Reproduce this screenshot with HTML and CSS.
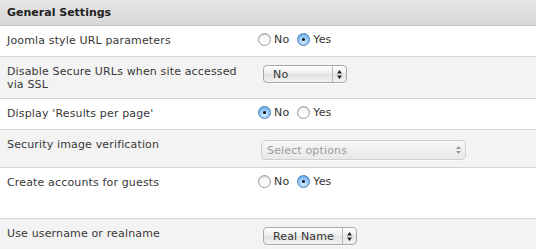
FILE: index.html
```html
<!DOCTYPE html>
<html lang="en">

<head>
    <meta charset="UTF-8" />
    <title>General Settings</title>
    <link rel="stylesheet" href="styles.css">
</head>

<body>

    <div class="settings">
        <div class="settings-head">General Settings</div>

        <div class="row">
            <div class="label">Joomla style URL parameters</div>
            <div class="control">
                <label class="radio"><input type="radio" name="sef"> No</label>
                <label class="radio"><input type="radio" name="sef" checked> Yes</label>
            </div>
        </div>

        <div class="row alt">
            <div class="label">Disable Secure URLs when site accessed via SSL</div>
            <div class="control">
                <span class="select select-no">
                    <select>
                        <option>No</option>
                        <option>Yes</option>
                    </select>
                    <span class="arrows">
                        <svg width="5" height="9" viewBox="0 0 5 9"><path d="M2.5 0 L5 3.5 H0 Z M0 5.5 H5 L2.5 9 Z" fill="#222"/></svg>
                    </span>
                </span>
            </div>
        </div>

        <div class="row">
            <div class="label">Display 'Results per page'</div>
            <div class="control">
                <label class="radio"><input type="radio" name="rpp" checked> No</label>
                <label class="radio"><input type="radio" name="rpp"> Yes</label>
            </div>
        </div>

        <div class="row alt tall">
            <div class="label">Security image verification</div>
            <div class="control">
                <span class="select select-multi">
                    <select disabled>
                        <option>Select options</option>
                    </select>
                    <span class="arrows">
                        <svg width="5" height="8" viewBox="0 0 5 8"><path d="M2.5 0 L5 3 H0 Z M0 5 H5 L2.5 8 Z" fill="#999"/></svg>
                    </span>
                </span>
            </div>
        </div>

        <div class="row taller">
            <div class="label">Create accounts for guests</div>
            <div class="control">
                <label class="radio"><input type="radio" name="guest"> No</label>
                <label class="radio"><input type="radio" name="guest" checked> Yes</label>
            </div>
        </div>

        <div class="row alt">
            <div class="label">Use username or realname</div>
            <div class="control">
                <span class="select select-name">
                    <select>
                        <option>Real Name</option>
                        <option>Username</option>
                    </select>
                    <span class="arrows">
                        <svg width="5" height="9" viewBox="0 0 5 9"><path d="M2.5 0 L5 3.5 H0 Z M0 5.5 H5 L2.5 9 Z" fill="#222"/></svg>
                    </span>
                </span>
            </div>
        </div>
    </div>

</body>

</html>
```

FILE: styles.css
```css
body {
    margin: 0;
    background-color: #fff;
    font-family: 'DejaVu Sans', Verdana, sans-serif;
    font-size: 11px;
    line-height: 13px;
    color: #333;
}

.settings-head {
    height: 25px;
    line-height: 25px;
    padding: 0 7px;
    font-weight: bold;
    color: #222;
    background: linear-gradient(#e6e6e6, #d7d7d7);
    border-bottom: 1px solid #c4c4c4;
}

.row {
    display: grid;
    grid-template-columns: 251px 1fr;
    padding: 7px 7px 7px 7px;
    min-height: 16px;
    border-bottom: 1px solid #d4d4d4;
    background-color: #fff;
}

.row.alt {
    background-color: #f3f3f3;
}

.row.tall {
    min-height: 23px;
}

.row.taller {
    min-height: 36px;
}

.label {
    padding-top: 1px;
    padding-right: 10px;
    letter-spacing: 0.15px;
    color: #383838;
}

.control {
    display: flex;
    align-items: flex-start;
    gap: 8px;
}

/* radios, aqua style */
.radio {
    display: inline-flex;
    align-items: center;
    gap: 3px;
    color: #333;
    letter-spacing: 0.15px;
}

.radio input {
    appearance: none;
    margin: 0;
    width: 13px;
    height: 13px;
    border-radius: 50%;
    border: 1px solid #9a9a9a;
    background: linear-gradient(#f4f4f4, #ffffff);
    box-shadow: inset 0 1px 1px rgba(0, 0, 0, 0.15);
    position: relative;
}

.radio input:checked {
    border-color: #4a7fb8;
    background: radial-gradient(circle at 50% 70%, #d6ecff 0, #8ec4f5 55%, #4f9de3 100%);
    box-shadow: none;
}

.radio input:checked::after {
    content: "";
    position: absolute;
    left: 4px;
    top: 4px;
    width: 3px;
    height: 3px;
    border-radius: 50%;
    background-color: #111;
}

/* selects */
.select {
    display: inline-flex;
    align-items: stretch;
    height: 16px;
    border: 1px solid #a8a8a8;
    border-radius: 4px;
    background: linear-gradient(#ffffff, #ececec 50%, #e2e2e2 51%, #f2f2f2);
    box-shadow: 0 1px 0 rgba(255, 255, 255, 0.6);
}

.select select {
    appearance: none;
    border: none;
    background: transparent;
    font-family: inherit;
    font-size: 11px;
    color: #333;
    padding: 0 6px 0 9px;
    margin: 0;
    outline: none;
    letter-spacing: 0.15px;
}

.select .arrows {
    display: flex;
    align-items: center;
    justify-content: center;
    width: 13px;
    border-left: 1px solid #b8b8b8;
}

.select-no {
    margin: 1px 0 0 5px;
}

.select-no select {
    width: 68px;
}

.select-name {
    margin: 1px 0 0 5px;
}

.select-name select {
    width: 78px;
}

.select-multi {
    margin: 3px 0 0 3px;
    height: 18px;
    border-color: #cfcfcf;
    background: linear-gradient(#f6f6f6, #e9e9e9);
}

.select-multi select {
    width: 190px;
    color: #777;
    padding-left: 5px;
}

.select-multi .arrows {
    border-left: none;
}
```
